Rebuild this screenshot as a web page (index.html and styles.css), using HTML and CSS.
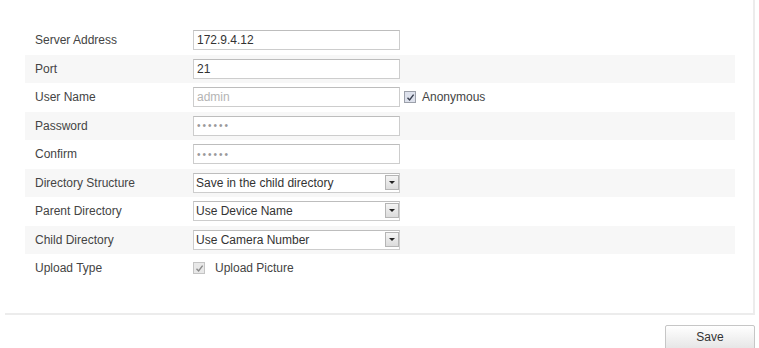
FILE: index.html
```html
<!DOCTYPE html>
<html lang="en">
<head>
    <meta charset="UTF-8">
    <title>FTP Settings</title>
    <link rel="stylesheet" href="styles.css">
</head>
<body>
<div class="panel">
    <div class="row">
        <label class="label">Server Address</label>
        <input class="field" type="text" value="172.9.4.12">
    </div>
    <div class="row alt">
        <label class="label">Port</label>
        <input class="field" type="text" value="21">
    </div>
    <div class="row">
        <label class="label">User Name</label>
        <input class="field" type="text" placeholder="admin" disabled>
        <span class="check blue">
            <svg width="9" height="9" viewBox="0 0 9 9"><path d="M1.5 4.8 L3.6 7 L7.6 1.6" fill="none" stroke="#3a4050" stroke-width="1.4"/></svg>
        </span>
        <span class="check-text">Anonymous</span>
    </div>
    <div class="row alt">
        <label class="label">Password</label>
        <input class="field pass" type="password" value="123456" disabled>
    </div>
    <div class="row">
        <label class="label">Confirm</label>
        <input class="field pass" type="password" value="123456" disabled>
    </div>
    <div class="row alt">
        <label class="label">Directory Structure</label>
        <div class="select-wrap">
            <select class="field">
                <option>Save in the child directory</option>
            </select>
            <span class="arrow"></span>
        </div>
    </div>
    <div class="row">
        <label class="label">Parent Directory</label>
        <div class="select-wrap">
            <select class="field">
                <option>Use Device Name</option>
            </select>
            <span class="arrow"></span>
        </div>
    </div>
    <div class="row alt">
        <label class="label">Child Directory</label>
        <div class="select-wrap">
            <select class="field">
                <option>Use Camera Number</option>
            </select>
            <span class="arrow"></span>
        </div>
    </div>
    <div class="row">
        <label class="label">Upload Type</label>
        <span class="check grey">
            <svg width="9" height="9" viewBox="0 0 9 9"><path d="M1.5 4.8 L3.6 7 L7.6 1.6" fill="none" stroke="#8a8a8a" stroke-width="1.4"/></svg>
        </span>
        <span class="check-text">Upload Picture</span>
    </div>
</div>

<div class="actions">
    <button type="button" class="save-button">Save</button>
</div>
</body>
</html>
```

FILE: styles.css
```css
body {
    margin: 0;
    font-family: "Liberation Sans", Arial, sans-serif;
    font-size: 12px;
    color: #444;
    background: #fff;
}
.panel {
    margin: 0 4px 0 5px;
    padding: 26px 18px 30px 20px;
    border-right: 2px solid #ececec;
    border-bottom: 2px solid #ececec;
}
.row {
    display: flex;
    align-items: center;
    height: 28.5px;
}
.row.alt {
    background: #f7f7f7;
}
.label {
    width: 158px;
    padding-left: 10px;
    flex-shrink: 0;
}
.field {
    box-sizing: border-box;
    width: 207px;
    height: 20px;
    padding: 0 3px;
    margin: 0;
    border: 1px solid #cdcdcd;
    border-top-color: #bdbdbd;
    background: #fff;
    font-family: inherit;
    font-size: 12px;
    color: #333;
    outline: none;
}
.field:disabled {
    background: #fff;
}
.field::placeholder {
    color: #b4b4b4;
}
.pass {
    color: #9a9a9a;
    letter-spacing: 2px;
    font-size: 10px;
}
.select-wrap {
    position: relative;
}
select.field {
    appearance: none;
    -webkit-appearance: none;
    padding-left: 2px;
}
.arrow {
    position: absolute;
    right: 1px;
    top: 2px;
    width: 14px;
    height: 15px;
    border: 1px solid #b5b5b5;
    background: linear-gradient(#f4f4f4, #dcdcdc);
    box-sizing: border-box;
}
.arrow::after {
    content: "";
    position: absolute;
    left: 3px;
    top: 5px;
    border-left: 3px solid transparent;
    border-right: 3px solid transparent;
    border-top: 3px solid #222;
}
.check {
    display: inline-flex;
    align-items: center;
    justify-content: center;
    box-sizing: border-box;
    width: 12px;
    height: 12px;
    margin-left: 4px;
    border: 1px solid #9ca0aa;
}
.check.blue {
    background: #dde1ec;
}
.check.grey {
    margin-left: 0;
    border-color: #c4c4c4;
    background: #e8e8e8;
}
.check-text {
    margin-left: 6px;
}
.check.grey + .check-text {
    margin-left: 10px;
}
.actions {
    display: flex;
    justify-content: flex-end;
    padding: 10px 4px 0 0;
}
.save-button {
    width: 90px;
    height: 26px;
    padding-bottom: 3px;
    border: 1px solid #c6c6c6;
    border-radius: 2px;
    background: linear-gradient(#ffffff, #e4e4e4);
    font-family: inherit;
    font-size: 12px;
    color: #333;
    cursor: pointer;
}
```
